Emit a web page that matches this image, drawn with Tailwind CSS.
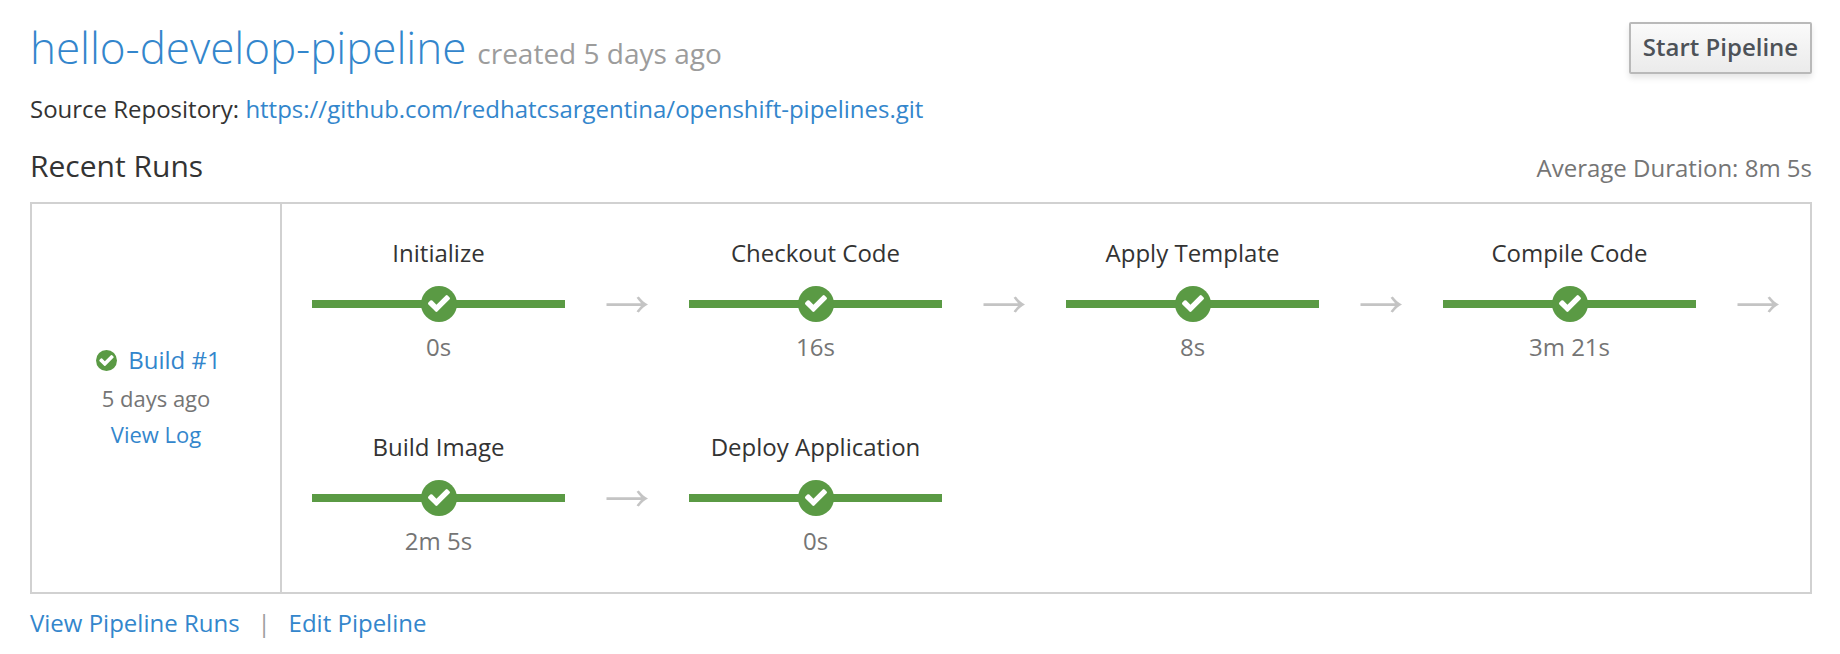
<!DOCTYPE html>
<html lang="en">
<head>
<meta charset="utf-8">
<title>hello-develop-pipeline</title>
<script src="https://cdn.jsdelivr.net/npm/@tailwindcss/browser@4"></script>
</head>
<body class="h-[654px] overflow-hidden bg-white pt-[22px] pr-7 pl-[30px] font-['Open_Sans',sans-serif] text-2xl/8 text-[#333333]">
<svg class="hidden" aria-hidden="true">
  <symbol id="check" viewBox="121 334 1550 1188"><path fill="currentColor" d="M1671 566q0 40-28 68l-724 724-136 136q-28 28-68 28t-68-28l-136-136-362-362q-28-28-28-68t28-68l136-136q28-28 68-28t68 28l294 295 656-657q28-28 68-28t68 28l136 136q28 28 28 68z"/></symbol>
  <symbol id="arrow" viewBox="0 0 42 18"><path fill="currentColor" d="M0.5 7.2H35C33.6 5.6 31.8 3.4 30.6 1.8L32.8 0.6C35.6 4.2 38.4 6.7 42 8.6C38.4 10.5 35.6 13 32.8 16.6L30.6 15.4C31.8 13.8 33.6 11.6 35 10H0.5Z"/></symbol>
</svg>

<header class="flex h-[52px] items-start justify-between">
  <h1 class="mt-px flex items-baseline leading-[48px]">
    <a class="text-[44px] font-light tracking-[-0.05px] text-[#3386cc]">hello-develop-pipeline</a>
    <small class="ml-[11px] text-[28px] text-[#9c9c9c]">created 5 days ago</small>
  </h1>
  <button class="flex h-[52px] w-[183px] items-center justify-center rounded-[2px] border-2 border-[#b9b9b9] bg-linear-to-b from-[#fafafa] to-[#ebebeb] pb-[2px] font-semibold text-[#4d5258] shadow-[0_4px_6px_rgba(3,3,3,0.1)]">Start Pipeline</button>
</header>

<p class="mt-[19px] tracking-[-0.012px]">Source Repository: <a class="text-[#3386cc]">https://github.com/redhatcsargentina/openshift-pipelines.git</a></p>

<div class="mt-[21px] flex h-10 items-baseline justify-between">
  <h2 class="text-[30px] leading-10">Recent Runs</h2>
  <span class="text-[#757575]">Average Duration: 8m 5s</span>
</div>

<section class="mt-4 flex h-[392px] border-2 border-[#d1d1d1]">
  <div class="flex w-[250px] flex-col items-center justify-center border-r-2 border-[#d1d1d1] pb-[3px] text-[22px] leading-[38px]">
    <div class="ml-[5px] flex items-center text-2xl leading-[38px]">
      <span class="mt-px mr-[11px] flex size-[21px] items-center justify-center rounded-full bg-[#5a9a44] text-white"><svg class="h-[11px] w-[15px]"><use href="#check"/></svg></span>
      <a class="text-[#3386cc]">Build #1</a>
    </div>
    <div class="text-[#757575]">5 days ago</div>
    <a class="-mt-px leading-9 text-[#3386cc]">View Log</a>
  </div>

  <div class="grid grid-cols-[repeat(4,377px)] grid-rows-[194px_194px]">
    <div class="flex pl-[30px]">
      <div class="flex w-[253px] flex-col items-center pt-[33px]">
        <div>Initialize</div>
        <div class="relative mt-[31px] mb-[23px] h-2 w-full bg-[#5a9a44]"><span class="absolute -top-[14px] left-[109px] size-9 rounded-full bg-[#5a9a44] pt-[9px] pl-[6.5px] text-white"><svg class="h-[17px] w-[22px]"><use href="#check"/></svg></span></div>
        <div class="text-[#757575]">0s</div>
      </div>
      <svg class="mt-[92px] ml-[41px] h-[18px] w-[42px] text-[#c4c4c4]"><use href="#arrow"/></svg>
    </div>
    <div class="flex pl-[30px]">
      <div class="flex w-[253px] flex-col items-center pt-[33px]">
        <div>Checkout Code</div>
        <div class="relative mt-[31px] mb-[23px] h-2 w-full bg-[#5a9a44]"><span class="absolute -top-[14px] left-[109px] size-9 rounded-full bg-[#5a9a44] pt-[9px] pl-[6.5px] text-white"><svg class="h-[17px] w-[22px]"><use href="#check"/></svg></span></div>
        <div class="text-[#757575]">16s</div>
      </div>
      <svg class="mt-[92px] ml-[41px] h-[18px] w-[42px] text-[#c4c4c4]"><use href="#arrow"/></svg>
    </div>
    <div class="flex pl-[30px]">
      <div class="flex w-[253px] flex-col items-center pt-[33px]">
        <div>Apply Template</div>
        <div class="relative mt-[31px] mb-[23px] h-2 w-full bg-[#5a9a44]"><span class="absolute -top-[14px] left-[109px] size-9 rounded-full bg-[#5a9a44] pt-[9px] pl-[6.5px] text-white"><svg class="h-[17px] w-[22px]"><use href="#check"/></svg></span></div>
        <div class="text-[#757575]">8s</div>
      </div>
      <svg class="mt-[92px] ml-[41px] h-[18px] w-[42px] text-[#c4c4c4]"><use href="#arrow"/></svg>
    </div>
    <div class="flex pl-[30px]">
      <div class="flex w-[253px] flex-col items-center pt-[33px]">
        <div>Compile Code</div>
        <div class="relative mt-[31px] mb-[23px] h-2 w-full bg-[#5a9a44]"><span class="absolute -top-[14px] left-[109px] size-9 rounded-full bg-[#5a9a44] pt-[9px] pl-[6.5px] text-white"><svg class="h-[17px] w-[22px]"><use href="#check"/></svg></span></div>
        <div class="text-[#757575]">3m 21s</div>
      </div>
      <svg class="mt-[92px] ml-[41px] h-[18px] w-[42px] text-[#c4c4c4]"><use href="#arrow"/></svg>
    </div>
    <div class="flex pl-[30px]">
      <div class="flex w-[253px] flex-col items-center pt-[33px]">
        <div>Build Image</div>
        <div class="relative mt-[31px] mb-[23px] h-2 w-full bg-[#5a9a44]"><span class="absolute -top-[14px] left-[109px] size-9 rounded-full bg-[#5a9a44] pt-[9px] pl-[6.5px] text-white"><svg class="h-[17px] w-[22px]"><use href="#check"/></svg></span></div>
        <div class="text-[#757575]">2m 5s</div>
      </div>
      <svg class="mt-[92px] ml-[41px] h-[18px] w-[42px] text-[#c4c4c4]"><use href="#arrow"/></svg>
    </div>
    <div class="flex pl-[30px]">
      <div class="flex w-[253px] flex-col items-center pt-[33px]">
        <div>Deploy Application</div>
        <div class="relative mt-[31px] mb-[23px] h-2 w-full bg-[#5a9a44]"><span class="absolute -top-[14px] left-[109px] size-9 rounded-full bg-[#5a9a44] pt-[9px] pl-[6.5px] text-white"><svg class="h-[17px] w-[22px]"><use href="#check"/></svg></span></div>
        <div class="text-[#757575]">0s</div>
      </div>
    </div>
  </div>
</section>

<footer class="mt-[13px] flex items-center">
  <a class="text-[#3386cc]">View Pipeline Runs</a>
  <span class="w-[49px] text-center text-[#9c9c9c]">|</span>
  <a class="text-[#3386cc]">Edit Pipeline</a>
</footer>
</body>
</html>
